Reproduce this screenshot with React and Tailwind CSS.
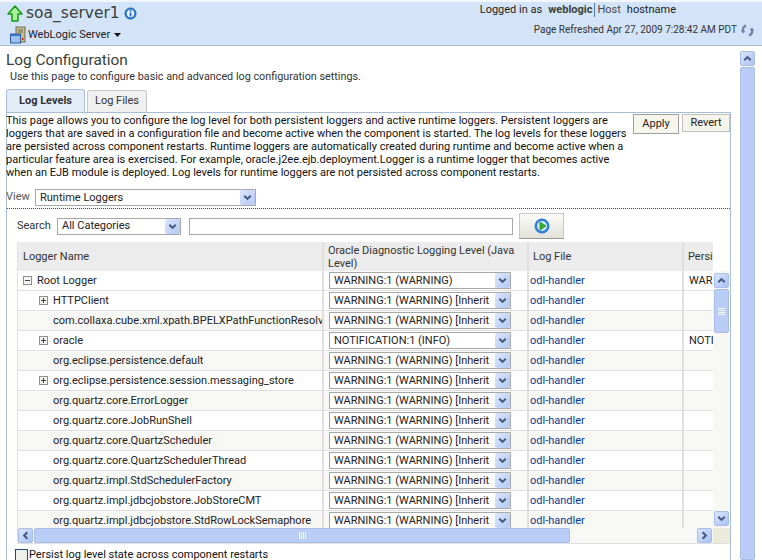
const F = "font-['Roboto','Liberation_Sans',sans-serif]";
const DITHER = "bg-[repeating-conic-gradient(#f3f3ef_0_25%,#fcfcfa_0_50%)] bg-[length:2px_2px]";
const DITHER_HEAD = "bg-[repeating-conic-gradient(#e8e8e8_0_25%,#f0f0f0_0_50%)] bg-[length:2px_2px]";

function Chevron({ dir = "down", className = "" }) {
  const d = {
    down: "M2.5 4 L6 7.5 L9.5 4",
    up: "M2.5 8 L6 4.5 L9.5 8",
    left: "M8 2.5 L4.5 6 L8 9.5",
    right: "M4 2.5 L7.5 6 L4 9.5",
  }[dir];
  return (
    <svg viewBox="0 0 12 12" className={className} fill="none" stroke="#44587f" strokeWidth="2.2">
      <path d={d} />
    </svg>
  );
}

function ArrowBtn({ dir, className = "" }) {
  return (
    <div className={`w-[15px] h-[15px] shrink-0 flex items-center justify-center rounded-[2px] border border-[#a9bde8] bg-gradient-to-br from-[#dbe6fb] to-[#a9c1f3] ${className}`}>
      <Chevron dir={dir} className="w-[11px] h-[11px]" />
    </div>
  );
}

function Select({ label, w }) {
  return (
    <div className={`${w} h-[17px] border border-[#a8a8a8] bg-white flex items-center pl-[4px] text-[11px] leading-[14px] text-[#222] overflow-hidden shrink-0`}>
      <span className="flex-1 whitespace-nowrap overflow-hidden">{label}</span>
      <div className="w-[15px] h-[15px] shrink-0 flex items-center justify-center rounded-[2px] bg-gradient-to-br from-[#dbe6fb] to-[#b3c8f4]">
        <Chevron className="w-[11px] h-[11px]" />
      </div>
    </div>
  );
}

function Grip({ vertical }) {
  return (
    <div className={`flex ${vertical ? "flex-col gap-px" : "gap-px"}`}>
      {[0, 1, 2, 3].map((i) => (
        <div key={i} className={`bg-white/90 ${vertical ? "w-[7px] h-px" : "w-px h-[7px]"}`} />
      ))}
    </div>
  );
}

function Toggle({ open }) {
  return (
    <svg width="9" height="9" viewBox="0 0 9 9" className="shrink-0">
      <rect x="0.5" y="0.5" width="8" height="8" fill="#f4f4f0" stroke="#8f8f8f" />
      <path d={open ? "M2 4.5H7" : "M2 4.5H7M4.5 2V7"} stroke="#444" />
    </svg>
  );
}

const I = "WARNING:1 (WARNING) [Inherit";
const rows = [
  { n: "Root Logger", lvl: "WARNING:1 (WARNING)", t: "open", d: 0, p: "WAR" },
  { n: "HTTPClient", lvl: I, t: "closed", d: 1 },
  { n: "com.collaxa.cube.xml.xpath.BPELXPathFunctionResolve", lvl: I, d: 1, alt: 1 },
  { n: "oracle", lvl: "NOTIFICATION:1 (INFO)", t: "closed", d: 1, p: "NOTI" },
  { n: "org.eclipse.persistence.default", lvl: I, d: 1, alt: 1 },
  { n: "org.eclipse.persistence.session.messaging_store", lvl: I, t: "closed", d: 1 },
  { n: "org.quartz.core.ErrorLogger", lvl: I, d: 1, alt: 1 },
  { n: "org.quartz.core.JobRunShell", lvl: I, d: 1 },
  { n: "org.quartz.core.QuartzScheduler", lvl: I, d: 1, alt: 1 },
  { n: "org.quartz.core.QuartzSchedulerThread", lvl: I, d: 1 },
  { n: "org.quartz.impl.StdSchedulerFactory", lvl: I, d: 1, alt: 1 },
  { n: "org.quartz.impl.jdbcjobstore.JobStoreCMT", lvl: I, d: 1 },
  { n: "org.quartz.impl.jdbcjobstore.StdRowLockSemaphore", lvl: I, d: 1, alt: 1 },
];

function Row({ r }) {
  return (
    <div className={`h-[20px] grid grid-cols-[306px_205px_155px_29px] border-b border-[#e0e0e0] text-[11px] leading-[14px] text-[#222] ${r.alt ? DITHER : "bg-white"}`}>
      <div className="flex items-center whitespace-nowrap overflow-hidden border-r-2 border-[#e0e0e0]">
        {r.d === 0 ? (
          <div className="flex items-center pl-[5px] gap-[5px]"><Toggle open /><span>{r.n}</span></div>
        ) : r.t ? (
          <div className="flex items-center pl-[21px] gap-[5px]"><Toggle /><span>{r.n}</span></div>
        ) : (
          <span className="pl-[35px]">{r.n}</span>
        )}
      </div>
      <div className="flex items-center pl-[5px] border-r-2 border-[#e0e0e0]">
        <Select label={r.lvl} w="w-[182px]" />
      </div>
      <div className="flex items-center pl-px border-r-2 border-[#e0e0e0] text-[#0a3a92]">odl-handler</div>
      <div className="flex items-center pl-[5px] overflow-hidden whitespace-nowrap">{r.p}</div>
    </div>
  );
}

export default function App() {
  return (
    <div className={`${F} w-[762px] h-[560px] overflow-hidden bg-white flex flex-col text-[#222]`}>
      <header className="h-[46px] shrink-0 bg-[#d3e4f9] border-t-2 border-t-[#f2f7fd] border-b border-b-[#a8bdd6] flex justify-between">
        <div className="pl-[7px] pt-px">
          <div className="flex items-center h-[21px]">
            <svg width="16" height="18" viewBox="0 0 16 18">
              <path d="M8 1 L15 9 H11 V16 H5 V9 H1 Z" fill="#a8f09a" stroke="#149b14" strokeWidth="1.5" strokeLinejoin="round" />
            </svg>
            <span className="ml-[3px] text-[15.5px] leading-none text-[#3a3f3a] font-['DejaVu_Sans',sans-serif]">soa_server1</span>
            <svg width="13" height="13" viewBox="0 0 13 13" className="ml-[4px]">
              <circle cx="6.5" cy="6.5" r="5.5" fill="#2f7fd6" stroke="#1d5ea8" />
              <circle cx="6.5" cy="6.5" r="3.7" fill="#e8f2fc" />
              <rect x="5.7" y="5.6" width="1.7" height="3.8" fill="#1d5ea8" />
              <rect x="5.7" y="3.3" width="1.7" height="1.5" fill="#1d5ea8" />
            </svg>
          </div>
          <div className="flex items-center mt-[2px] pl-[3px] h-[18px]">
            <svg width="16" height="18" viewBox="0 0 16 18">
              <rect x="6" y="1" width="9" height="15" fill="#c9bd8c" stroke="#6f6a50" />
              <path d="M8 4H13M8 6H13" stroke="#6f6a50" />
              <rect x="12" y="12" width="1.5" height="2" fill="#c22" />
              <rect x="0.5" y="8" width="10" height="9" fill="#9cc1ee" stroke="#2f5d9c" />
              <rect x="0.5" y="8" width="10" height="2" fill="#3a74c0" />
            </svg>
            <span className="ml-[2px] text-[11px] leading-[14px]">WebLogic Server</span>
            <svg width="7" height="4" viewBox="0 0 7 4" className="ml-[4px]"><path d="M0 0H7L3.5 4Z" fill="#111" /></svg>
          </div>
        </div>
        <div className="flex flex-col items-end pr-[8px] text-[11px] leading-[14px]">
          <div className="h-[15px] mr-[78px] flex items-center whitespace-nowrap">
            <span>Logged in as</span>
            <span className="ml-[6px] font-bold text-[#3a3f3a]">weblogic</span>
            <span className="ml-[2px] border-l border-[#5a7aa8] pl-[2px] text-[#444]">Host</span>
            <span className="ml-[6px]">hostname</span>
          </div>
          <div className="mt-[6px] h-[14px] flex items-center whitespace-nowrap text-[#333] text-[10px]">
            <span>Page Refreshed Apr 27, 2009 7:28:42 AM PDT</span>
            <svg width="13" height="13" viewBox="0 0 13 13" className="ml-[4px]" fill="none" stroke="#6f86a6" strokeWidth="2.4">
              <path d="M5 1.5 C2.5 2.5 1.5 5 2 7.5 M8 11.5 C10.5 10.5 11.5 8 11 5.5" />
              <path d="M0 6.5 L2 9.5 L4.5 7 Z M13 6.5 L11 3.5 L8.5 6 Z" fill="#6f86a6" stroke="none" />
            </svg>
          </div>
        </div>
      </header>

      <div className="flex-1 flex min-h-0">
        <main className="w-[733px] shrink-0 pl-[6px] pt-[5px]">
          <h1 className="text-[15.4px] leading-[18px] text-[#3a3f3a] font-normal h-[18px]">Log Configuration</h1>
          <p className="pl-[4px] text-[10.8px] leading-[14px] mt-px text-[#333]">Use this page to configure basic and advanced log configuration settings.</p>
          <div className="flex mt-[5px] h-[23px] items-end">
            <div className="w-[79px] h-[23px] rounded-t-[3px] border border-b-0 border-[#a8bdd6] bg-[#e3edf8] flex items-center justify-center text-[11px] font-bold text-[#333]">Log Levels</div>
            <div className="ml-[2px] w-[60px] h-[22px] rounded-t-[3px] border border-b-0 border-[#c8c8c8] bg-[#f0f0f0] flex items-center justify-center text-[11px] text-[#333]">Log Files</div>
          </div>
          <section className="w-[725px] h-[800px] border-l border-t border-r border-[#a8bdd6] -mb-[800px]">
            <div className="flex">
              <p className="w-[625px] text-[11px] leading-[13px] text-[#111] pt-px -ml-px">
                This page allows you to configure the log level for both persistent loggers and active runtime loggers. Persistent loggers are loggers that are saved in a configuration file and become active when the component is started. The log levels for these loggers are persisted across component restarts. Runtime loggers are automatically created during runtime and become active when a particular feature area is exercised. For example, oracle.j2ee.ejb.deployment.Logger is a runtime logger that becomes active when an EJB module is deployed. Log levels for runtime loggers are not persisted across component restarts.
              </p>
              <div className="flex gap-[3px] pl-[3px] pt-px items-start">
                <div className="w-[46px] h-[20px] border border-[#a0a0a0] bg-[#f5f5ec] flex items-center justify-center text-[11px] text-[#222]">Apply</div>
                <div className="w-[48px] h-[18px] border border-[#c0c0c0] bg-[#f5f5ec] flex items-center justify-center text-[11px] text-[#222]">Revert</div>
              </div>
            </div>
            <div className="flex items-center h-[22px] mt-[8px] border-b border-dotted border-[#1e4fb0] text-[11px] text-[#555]">
              <span className="w-[29px] -ml-px">View</span>
              <Select label="Runtime Loggers" w="w-[221px]" />
            </div>
            <div className="flex items-center h-[26px] mt-[4px] pl-[10px] text-[11px] text-[#333]">
              <span className="w-[40px]">Search</span>
              <Select label="All Categories" w="w-[124px]" />
              <div className="ml-[8px] w-[324px] h-[17px] border border-[#a8a8a8] bg-white" />
              <div className="ml-[6px] w-[45px] h-[26px] border border-[#c8c8c8] border-b-[#9a9a9a] bg-gradient-to-b from-[#fbfbf8] to-[#e2e2da] flex items-center justify-center">
                <svg width="16" height="16" viewBox="0 0 16 16">
                  <circle cx="8" cy="8" r="7.5" fill="#2f80d8" />
                  <circle cx="8" cy="8" r="5" fill="#cfe6fa" />
                  <path d="M6 4 L12 8 L6 12 Z" fill="#3cae2c" stroke="#1f7a20" strokeWidth="0.6" />
                </svg>
              </div>
            </div>
            <div className="ml-[10px] mt-[3px] w-[712px] grid grid-cols-[695px_17px] grid-rows-[29px_257px_15px] border-r border-b border-[#e0e0e0] border-l">
              <div className={`grid grid-cols-[306px_205px_155px_29px] ${DITHER_HEAD} text-[11px] leading-[13px] text-[#333]`}>
                <div className="flex items-center pl-[5px] border-r-2 border-[#e0e0e0]">Logger Name</div>
                <div className="flex items-center pl-[4px] border-r-2 border-[#e0e0e0]">Oracle Diagnostic Logging Level (Java Level)</div>
                <div className="flex items-center pl-[4px] border-r-2 border-[#e0e0e0]">Log File</div>
                <div className="flex items-center pl-[4px] overflow-hidden whitespace-nowrap">Persistent</div>
              </div>
              <div className="bg-white" />
              <div className="overflow-hidden">
                {rows.map((r) => <Row key={r.n} r={r} />)}
              </div>
              <div className={`${DITHER} flex flex-col items-center pt-[2px]`}>
                <ArrowBtn dir="up" />
                <div className="mt-px w-[15px] h-[44px] rounded-[2px] border border-[#a9bde8] bg-[#b9cdf6] flex items-center justify-center"><Grip vertical /></div>
                <div className="flex-1" />
                <ArrowBtn dir="down" className="mb-[2px]" />
              </div>
              <div className={`${DITHER} flex items-center pr-[1px]`}>
                <ArrowBtn dir="left" />
                <div className="ml-px w-[536px] h-[15px] rounded-[2px] border border-[#a9bde8] bg-[#b9cdf6] flex items-center justify-center"><Grip /></div>
                <div className="flex-1" />
                <ArrowBtn dir="right" />
              </div>
              <div className="bg-[#ebebdc]" />
            </div>
            <div className="mt-[4px] ml-[8px] flex items-center text-[11px] leading-[14px] h-[14px]">
              <div className="w-[13px] h-[13px] border border-[#1d4f7a] bg-[#f0f0ea] mr-px" />
              <span className="text-[#111]">Persist log level state across component restarts</span>
            </div>
          </section>
        </main>
        <aside className="w-[15px] ml-[7px] mt-[5px] flex flex-col">
          <ArrowBtn dir="up" />
          <div className="mt-px flex-1 rounded-[2px] border border-[#a9bde8] bg-[#b9cdf6]" />
        </aside>
      </div>
    </div>
  );
}
